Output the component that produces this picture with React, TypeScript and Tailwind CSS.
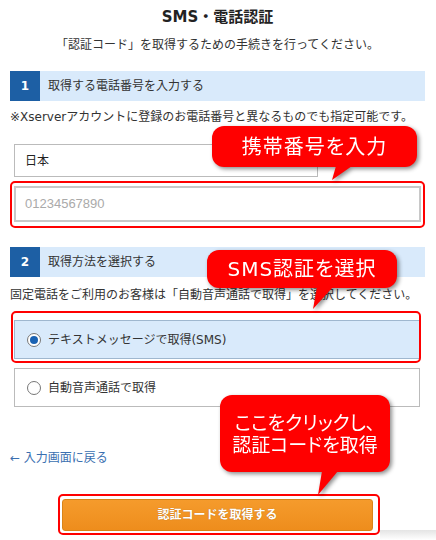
const JP = "font-['DejaVu_Sans','Noto_Sans_CJK_JP',sans-serif]";

function StepHeader({ num, label }: { num: string; label: string }) {
  return (
    <div className="flex h-[30px] items-stretch bg-[#d9eafb]">
      <div className="flex w-[30px] items-center justify-center bg-[#1d5fa4] text-[12px] font-bold text-white">
        {num}
      </div>
      <div className="flex items-center pl-[8px] text-[12px] text-[#333]">{label}</div>
    </div>
  );
}

function Radio({ checked }: { checked: boolean }) {
  return (
    <div className="flex h-[14px] w-[14px] items-center justify-center rounded-full border border-[#777] bg-white">
      {checked && <div className="h-[8px] w-[8px] rounded-full bg-[#1a62b3]" />}
    </div>
  );
}

function Bubble({
  className,
  tail,
  children,
}: {
  className: string;
  tail: string;
  children: React.ReactNode;
}) {
  return (
    <div className={`absolute drop-shadow-[2px_2px_2px_rgba(0,0,0,0.45)] ${className}`}>
      <div className="flex h-full w-full flex-col items-center justify-center rounded-[12px] bg-[#ff0000] text-white [font-feature-settings:'palt']">
        {children}
      </div>
      <svg className="absolute left-0 top-0 overflow-visible" width="1" height="1">
        <polygon points={tail} fill="#ff0000" />
      </svg>
    </div>
  );
}

export default function App() {
  return (
    <div className={`relative h-[540px] w-[436px] overflow-hidden bg-white ${JP}`}>
      <div className="w-[436px] pl-[10px] pr-[11px]">
        <p className="pt-[8px] text-center text-[15px] font-bold leading-[18px] text-[#222]">
          SMS・電話認証
        </p>
        <p className="mt-[10px] text-center text-[12px] leading-[18px] text-[#333]">
          「認証コード」を取得するための手続きを行ってください。
        </p>

        <div className="mt-[17px]">
          <StepHeader num="1" label="取得する電話番号を入力する" />
        </div>
        <p className="mt-[7px] whitespace-nowrap text-[12px] leading-[18px] text-[#333]">
          ※Xserverアカウントに登録のお電話番号と異なるものでも指定可能です。
        </p>

        <div className="ml-[4px] mt-[18px] flex h-[33px] w-[304px] items-center border border-[#bbb] px-[10px] text-[12px] text-[#222]">
          日本
        </div>
        <div className="ml-[4px] mt-[9px] flex h-[36px] w-[407px] items-center border-2 border-[#c8c8c8] px-[9px] font-['Liberation_Sans',sans-serif] text-[13px] text-[#aaa]">
          01234567890
        </div>

        <div className="mt-[25px]">
          <StepHeader num="2" label="取得方法を選択する" />
        </div>
        <p className="mt-[9px] whitespace-nowrap text-[12px] leading-[18px] text-[#333]">
          固定電話をご利用のお客様は「自動音声通話で取得」を選択してください。
        </p>

        <div className="ml-[4px] mt-[16px] flex h-[39px] w-[406px] items-center gap-[7px] border border-[#9fb7cf] bg-[#d9eafb] pl-[12px] text-[12px] text-[#333]">
          <Radio checked />
          <span>テキストメッセージで取得(SMS)</span>
        </div>
        <div className="ml-[4px] mt-[9px] flex h-[39px] w-[406px] items-center gap-[7px] border border-[#bbb] bg-white pl-[12px] text-[12px] text-[#333]">
          <Radio checked={false} />
          <span>自動音声通話で取得</span>
        </div>

        <p className="mt-[42px] text-[12px] leading-[18px] text-[#3a6fb0]">← 入力画面に戻る</p>

        <div className="mx-auto mt-[32px] flex h-[32px] w-[311px] items-center justify-center rounded-[3px] border border-[#d98418] bg-gradient-to-b from-[#f59b2c] to-[#ee8d1c] text-[12px] font-bold text-white [text-shadow:0_0_1px_rgba(0,0,0,0.3)]">
          認証コードを取得する
        </div>
      </div>

      {/* annotation outlines */}
      <div className="absolute left-[10px] top-[181px] h-[47px] w-[415px] rounded-[5px] border-2 border-[#f00]" />
      <div className="absolute left-[11px] top-[311px] h-[52px] w-[410px] rounded-[5px] border-2 border-[#f00]" />
      <div className="absolute left-[58px] top-[494px] h-[41px] w-[322px] rounded-[5px] border-2 border-[#f00]" />

      <div className="absolute left-[380px] top-[530px] h-[10px] w-[56px] bg-gradient-to-b from-[#e4e4e4] to-white" />

      {/* callouts */}
      <Bubble className="left-[212px] top-[126px] h-[41px] w-[205px]" tail="124,40 140,40 120,54">
        <span className="text-[20px] leading-[24px] tracking-[1px]">携帯番号を入力</span>
      </Bubble>
      <Bubble className="left-[207px] top-[250px] h-[38px] w-[190px]" tail="110,37 126,37 106,59">
        <span className="text-[20px] leading-[24px] tracking-[1px]">SMS認証を選択</span>
      </Bubble>
      <Bubble className="left-[220px] top-[395px] h-[77px] w-[170px]" tail="102,76 118,76 98,100">
        <span className="text-[19px] leading-[22px]">ここをクリックし、</span>
        <span className="text-[19px] leading-[22px]">認証コードを取得</span>
      </Bubble>
    </div>
  );
}
